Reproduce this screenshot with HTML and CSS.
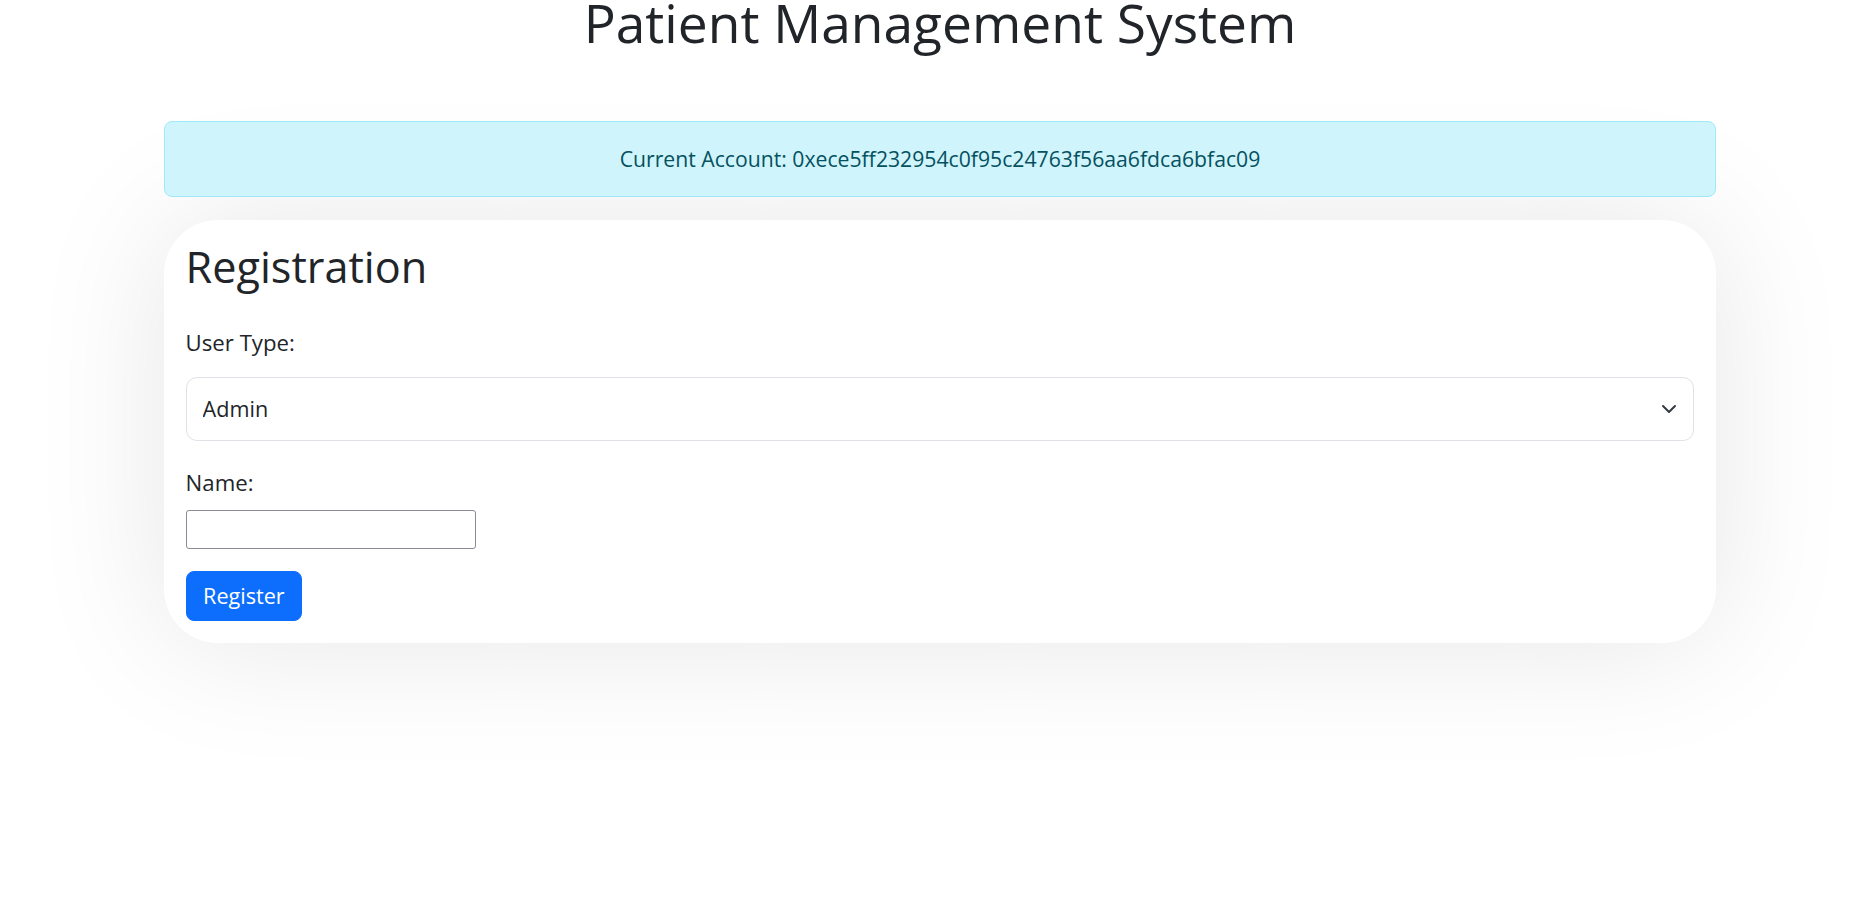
FILE: index.html
```html
<!DOCTYPE html>
<html lang="en">
<head>
<meta charset="utf-8">
<title>Patient Management System</title>
<link rel="stylesheet" href="styles.css">
</head>
<body>
<div class="page">
  <h1 class="title">Patient Management System</h1>
  <div class="alert">Current Account: 0xece5ff232954c0f95c24763f56aa6fdca6bfac09</div>
  <div class="card">
    <h2 class="card-title">Registration</h2>
    <form class="form">
      <div class="group group-type">
        <label class="label label-type" for="userType">User Type:</label>
        <div class="select-wrap">
          <select id="userType" class="select">
            <option>Admin</option>
            <option>Doctor</option>
            <option>Patient</option>
          </select>
          <svg class="chevron" viewBox="0 0 16 16" width="16" height="16" aria-hidden="true"><path fill="none" stroke="#343a40" stroke-linecap="round" stroke-linejoin="round" stroke-width="2" d="m2 5 6 6 6-6"/></svg>
        </div>
      </div>
      <div class="group">
        <label class="label label-name" for="name">Name:</label>
        <input id="name" class="input" type="text">
      </div>
      <button type="button" class="btn">Register</button>
    </form>
  </div>
</div>
</body>
</html>
```

FILE: styles.css
```css
* { box-sizing: border-box; }
html, body { margin: 0; background: #fff; }
body {
  font-family: "Open Sans", "Noto Sans", sans-serif;
  font-size: 21.6px;
  line-height: 32.4px;
  color: #212529;
}
.page {
  min-height: 920px;
  padding: 0 134px 240px 164px;
}
.title {
  margin: 0 0 75px;
  font-size: 53.3px;
  line-height: 46px;
  font-weight: 400;
  text-align: center;
}
.alert {
  position: relative;
  margin: 0 0 22.5px;
  padding: 21px 21.6px;
  background: #cff4fc;
  border: 1px solid #9eeaf9;
  border-radius: 8px;
  color: #055160;
  font-size: 21.2px;
  text-align: center;
}
.card {
  background: #fff;
  border-radius: 54px;
  padding: 21.6px;
  box-shadow: 0 0 135px rgba(0, 0, 0, 0.1);
}
.card-title {
  margin: -1px 0 35px;
  font-size: 43.2px;
  line-height: 51.84px;
  font-weight: 400;
}
.form { display: flex; flex-direction: column; align-items: flex-start; }
.group { display: flex; flex-direction: column; align-items: flex-start; align-self: stretch; }
.group-type { margin-bottom: 26px; }
.label { font-size: 22.2px; }
.label-type { margin-bottom: 17.6px; }
.label-name { margin-bottom: 10.5px; }
.select-wrap { position: relative; align-self: stretch; }
.select {
  appearance: none;
  -webkit-appearance: none;
  display: block;
  width: 100%;
  height: 64px;
  padding: 0 48px 0 16px;
  font: inherit;
  color: #212529;
  background: #fff;
  border: 1px solid #dee2e6;
  border-radius: 10.8px;
}
.chevron {
  position: absolute;
  right: 17.5px;
  top: 50%;
  transform: translateY(-50%);
  pointer-events: none;
}
.input {
  width: 290px;
  height: 38.7px;
  margin-bottom: 22.3px;
  padding: 0 3px;
  font: inherit;
  background: #fff;
  border: 1px solid #8b8a95;
  border-radius: 3px;
}
.btn {
  height: 50px;
  padding: 0 16.5px;
  font: inherit;
  color: #fff;
  background: #0d6efd;
  border: 1px solid #0d6efd;
  border-radius: 8px;
}
```
